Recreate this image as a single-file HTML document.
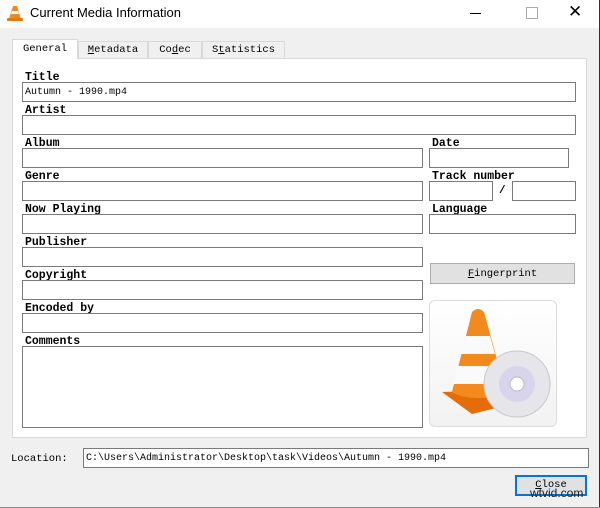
<!DOCTYPE html><html><head><style>
body{margin:0;width:600px;height:508px;overflow:hidden;background:#f0f0f0;font-family:"Liberation Mono",monospace;font-size:10px;color:#000;position:relative}
.a{position:absolute}
.in{position:absolute;background:#fff;border:1px solid #7a7a7a;box-sizing:border-box;height:20px;line-height:20px;padding-left:2px}
.l{position:absolute;font-weight:bold;font-size:11.5px;line-height:11px}
.tab{position:absolute;top:41px;height:17px;border:1px solid #d9d9d9;border-bottom:none;box-sizing:border-box;background:#f0f0f0;text-align:center;line-height:17px;font-size:10.5px}
</style></head><body>
<div class="a" style="left:0;top:0;width:600px;height:28px;background:#fff"></div>
<div class="a" style="right:0;top:0;width:1px;height:508px;background:#333"></div>
<div class="a" style="left:0;bottom:0;width:600px;height:1px;background:#888"></div>
<svg class="a" style="left:7px;top:5px" width="16" height="17" viewBox="0 0 16 17"><path d="M6 1h4l4 13H2z" fill="#f08a1c"/><path d="M5 6h6l1 3H4z" fill="#fff"/><rect x="0" y="13" width="16" height="3" rx="1" fill="#e07a10"/></svg>
<div class="a" style="left:30px;top:5px;font-family:'Liberation Sans',sans-serif;font-size:13px">Current Media Information</div>
<div class="a" style="left:470px;top:13px;width:11px;height:1px;background:#000"></div>
<div class="a" style="left:526px;top:7px;width:10px;height:10px;border:1px solid #aaa"></div>
<div class="a" style="left:568px;top:2px;font-family:'Liberation Sans',sans-serif;font-size:17px;font-weight:300">✕</div>
<div class="a" style="left:12px;top:58px;width:575px;height:380px;background:#fff;border:1px solid #d9d9d9;box-sizing:border-box"></div>
<div class="tab" style="left:12px;top:39px;height:20px;width:66px;background:#fff;border-bottom:none;line-height:19px">General</div>
<div class="tab" style="left:78px;width:70px"><u>M</u>etadata</div>
<div class="tab" style="left:148px;width:54px">Co<u>d</u>ec</div>
<div class="tab" style="left:202px;width:83px">S<u>t</u>atistics</div>
<div class="l" style="left:25px;top:72px">Title</div>
<div class="in" style="left:22px;top:82px;width:554px">Autumn - 1990.mp4</div>
<div class="l" style="left:25px;top:105px">Artist</div>
<div class="in" style="left:22px;top:115px;width:554px"></div>
<div class="l" style="left:25px;top:138px">Album</div>
<div class="in" style="left:22px;top:148px;width:401px"></div>
<div class="l" style="left:432px;top:138px">Date</div>
<div class="in" style="left:429px;top:148px;width:140px"></div>
<div class="l" style="left:25px;top:171px">Genre</div>
<div class="in" style="left:22px;top:181px;width:401px"></div>
<div class="l" style="left:432px;top:171px">Track number</div>
<div class="in" style="left:429px;top:181px;width:64px"></div>
<div class="a" style="left:499px;top:185px;font-weight:bold;font-size:11px">/</div>
<div class="in" style="left:512px;top:181px;width:64px"></div>
<div class="l" style="left:25px;top:204px">Now Playing</div>
<div class="in" style="left:22px;top:214px;width:401px"></div>
<div class="l" style="left:432px;top:204px">Language</div>
<div class="in" style="left:429px;top:214px;width:147px"></div>
<div class="l" style="left:25px;top:237px">Publisher</div>
<div class="in" style="left:22px;top:247px;width:401px"></div>
<div class="a" style="left:430px;top:263px;width:145px;height:21px;background:#e1e1e1;border:1px solid #adadad;box-sizing:border-box;text-align:center;line-height:21px;font-size:10.5px"><u>F</u>ingerprint</div>
<div class="l" style="left:25px;top:270px">Copyright</div>
<div class="in" style="left:22px;top:280px;width:401px"></div>
<div class="l" style="left:25px;top:303px">Encoded by</div>
<div class="in" style="left:22px;top:313px;width:401px"></div>
<div class="l" style="left:25px;top:336px">Comments</div>
<div class="in" style="left:22px;top:346px;width:401px;height:82px"></div>
<div class="a" style="left:429px;top:300px;width:128px;height:127px;border:1px solid #ddd;border-radius:6px;box-sizing:border-box;background:linear-gradient(#fff,#f2f2f2)"></div>
<svg class="a" style="left:432px;top:304px" width="122" height="120" viewBox="0 0 122 120">
<path d="M10 88l30 22 40-10-10-14z" fill="#e46d0a"/>
<path d="M40 8c4-4 8-4 12 0l22 80c-10 8-44 8-54 0z" fill="#f28a1e"/>
<path d="M34 32h24l5 18H29z" fill="#fafafa"/><path d="M26 62h40l5 18H21z" fill="#fafafa"/>
<circle cx="85" cy="80" r="33" fill="#e6e6ea" stroke="#c8c8cc"/><circle cx="85" cy="80" r="18" fill="#d8d4ec"/><circle cx="85" cy="80" r="7" fill="#fff" stroke="#bbb"/>
</svg>
<div class="a" style="left:11px;top:453px;font-size:10.5px">Location:</div>
<div class="in" style="left:83px;top:448px;width:506px">C:\Users\Administrator\Desktop\task\Videos\Autumn - 1990.mp4</div>
<div class="a" style="left:515px;top:475px;width:72px;height:21px;background:#e1e1e1;border:2px solid #0078d7;box-sizing:border-box;text-align:center;line-height:17px;font-size:10.5px"><u>C</u>lose</div>
<div class="a" style="left:530px;top:486px;font-family:'Liberation Sans',sans-serif;font-size:12px;color:#222">wtvid.com</div>
</body></html>
